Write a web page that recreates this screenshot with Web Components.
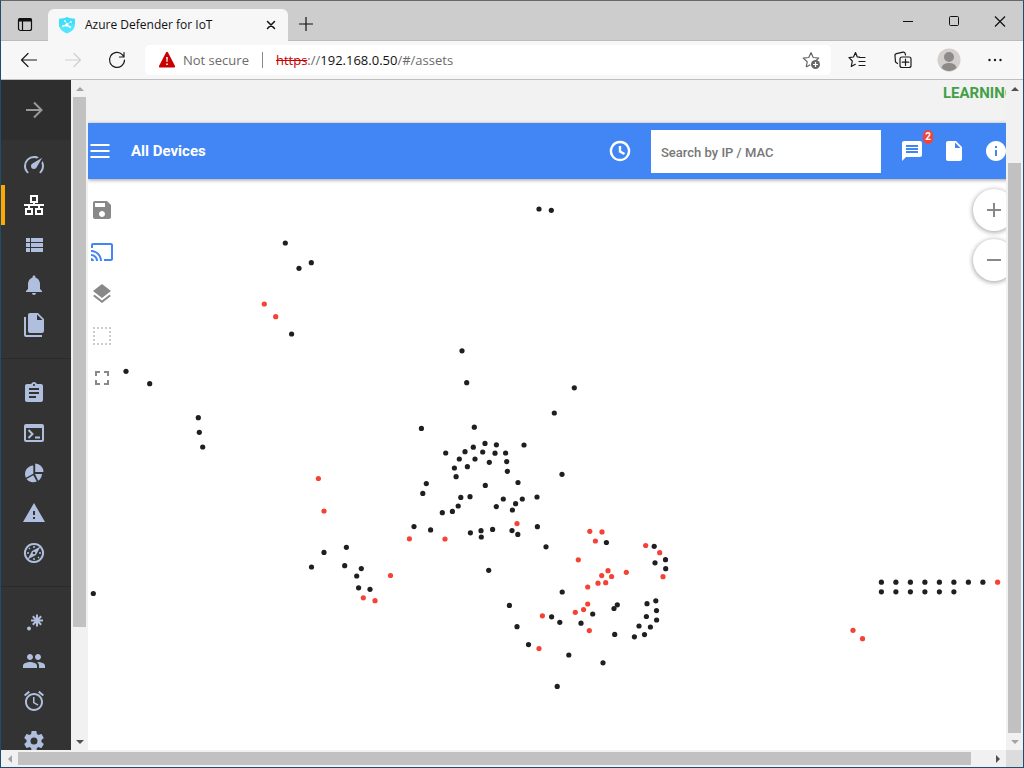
<!DOCTYPE html>
<html lang="en">
<head>
<meta charset="utf-8">
<title>Azure Defender for IoT</title>
<style>
  html, body { height: 100%; margin: 0; }
  body { font-family: Roboto, "Liberation Sans", sans-serif; overflow: hidden; }
</style>
</head>
<body>
<browser-window>
  <tab-strip slot="tabs">Azure Defender for IoT</tab-strip>
  <address-bar slot="toolbar"></address-bar>
  <side-nav slot="nav"></side-nav>
  <main-view slot="view"></main-view>
</browser-window>

<script>
const define = (name, html, setup) => {
  const template = document.createElement('template');
  template.innerHTML = html;
  customElements.define(name, class extends HTMLElement {
    constructor() {
      super();
      this.attachShadow({ mode: 'open' }).append(template.content.cloneNode(true));
    }
    connectedCallback() { if (setup) setup(this, this.shadowRoot); }
  });
};

const path = d => `<path fill="currentColor" d="${d}"/>`;
const line = (d, w = 1) => `<path fill="none" stroke="currentColor" stroke-width="${w}" stroke-linecap="round" stroke-linejoin="round" d="${d}"/>`;
const sharp = (d, w = 2) => `<path fill="none" stroke="currentColor" stroke-width="${w}" d="${d}"/>`;

const ICONS = {
  workspaces: `<rect x="5.5" y="6.5" width="13" height="12" rx="2" fill="none" stroke="currentColor" stroke-width="1.2"/><path d="M5 8a2 2 0 0 1 2-2h10a2 2 0 0 1 2 2v1.500H5z" fill="currentColor"/><path d="M9.500 9v9" stroke="currentColor" stroke-width="1.2"/>`,
  shield: `<path d="M12 4l2 1q3 1 6 .8v6.200q0 5-8 8.500q-8-3.500-8-8.500V5.800Q7 6 10 5z" fill="#50e6ff"/><path d="M12 4l2 1q3 1 6 .8v5L4 14V5.800Q7 6 10 5z" fill="#32d4f5" opacity=".5"/><g stroke="#fff" stroke-width=".6" fill="#fff"><path d="M8 13l4-2 3 3M12 11l-2-3M12 11l4-2"/><circle cx="8" cy="13" r=".8"/><circle cx="12" cy="11.500" r="1"/><circle cx="15" cy="14" r=".8"/><circle cx="10" cy="8" r=".6"/><circle cx="16" cy="9" r=".6"/></g>`,
  tabclose: line('M8.500 8.500l7 7M15.500 8.500l-7 7', 1.5),
  plus: sharp('M12 5v14M5 12h14', 1.2),
  minimize: sharp('M7 9.500h10', 1),
  maximize: `<rect x="7.500" y="4.500" width="9" height="9" rx="1" fill="none" stroke="currentColor"/>`,
  close: sharp('M7 4.500l10 10M17 4.500l-10 10', 1.2),
  back: line('M19.500 12H4.500M11 5.500L4.500 12l6.500 6.500', 1.2),
  forward: line('M4.500 12h15M13 5.500l6.500 6.500-6.500 6.500', 1.2),
  refresh: line('M19.500 12a7.500 7.500 0 1 1-2-5.200l1.500 2.200M19 4.500V9h-4.500', 1.2),
  danger: `<path d="M11 4.500q1-1.500 2 0l7 13.500q.5 1.500-1 1.500H5q-1.500 0-1-1.500z" fill="#c80000"/><path d="M11.200 9h1.600l-.3 5h-1zM11.200 15.500h1.600V17h-1.600z" fill="#fff"/>`,
  staradd: `<path d="M12 4.500l2.200 5 5.500.6-4 3.700M7.200 19l1-5.200-4-3.700 5.600-.6L12 4.500M7.200 19l4-2.300" fill="none" stroke="#666" stroke-width="1.200" stroke-linejoin="round"/><circle cx="16.500" cy="16.500" r="4.500" fill="#666"/><path d="M16.500 14v5M14 16.500h5" stroke="#fff" stroke-width="1.200"/>`,
  favorites: line('M14.500 9.200L12.300 9 10.500 4.500 8.500 9l-4.500.6 3.300 3.400-1 5.500 4-2.200M14.500 9.500h5.500M14 13.500h6M14 17.500h6', 1.2),
  collections: line('M6.500 15.500l-2-1.500L4 8a2 2 0 0 1 1.500-2.300l6.500-1.500a2 2 0 0 1 2.200 1.500l.3 1.300M11 9h7a2 2 0 0 1 2 2v6.500a2 2 0 0 1-2 2h-7a2 2 0 0 1-2-2V11a2 2 0 0 1 2-2zM14.500 11v6.500M11.200 14.200h6.600', 1.2),
  dots: `<g fill="currentColor"><circle cx="6.500" cy="12" r="1.200"/><circle cx="12" cy="12" r="1.200"/><circle cx="17.500" cy="12" r="1.200"/></g>`,
  avatar: `<circle cx="12" cy="12" r="11.500" fill="#d2cfcc"/><circle cx="12" cy="9" r="5" fill="#8e8a87"/><path d="M4.500 20q1-5 7.500-5t7.500 5q-3.500 3.200-7.500 3.200T4.500 20z" fill="#8e8a87"/>`,
  arrow: sharp('M4 12h15M12 4.500l7.500 7.500-7.500 7.500', 2),
  gauge: path('M12,16A3,3 0 0,1 9,13C9,11.88 9.61,10.9 10.5,10.39L20.21,4.77L14.68,14.35C14.18,15.33 13.17,16 12,16M12,3C13.81,3 15.5,3.5 16.97,4.32L14.87,5.53C14,5.19 13,5 12,5A8,8 0 0,0 4,13C4,15.21 4.89,17.21 6.34,18.65C6.74,19.04 6.74,19.67 6.35,20.06C5.96,20.45 5.32,20.45 4.93,20.07C3.12,18.26 2,15.76 2,13A10,10 0 0,1 12,3M22,13C22,15.76 20.88,18.26 19.07,20.07C18.68,20.45 18.05,20.45 17.66,20.06C17.27,19.67 17.27,19.04 17.66,18.65C19.11,17.2 20,15.21 20,13C20,12 19.81,11 19.46,10.1L20.67,8C21.5,9.5 22,11.18 22,13Z'),
  network: sharp('M9 3h6v6H9zM12 9v3M2 12h20M7 12v3M17 12v3M4 16h6v5H4zM14 16h6v5h-6z', 2),
  list: path('M4 14h4v-4H4v4zm0 5h4v-4H4v4zM4 9h4V5H4v4zm5 5h12v-4H9v4zm0 5h12v-4H9v4zM9 5v4h12V5H9z'),
  bell: path('M12 22c1.100 0 2-.9 2-2h-4c0 1.100.89 2 2 2zm6-6v-5c0-3.070-1.640-5.640-4.500-6.320V4c0-.83-.67-1.500-1.500-1.500s-1.500.67-1.500 1.500v.68C7.630 5.360 6 7.920 6 11v5l-2 2v1h16v-1l-2-2z'),
  files: path('M15,7H20.5L15,1.5V7M8,0H16L22,6V18A2,2 0 0,1 20,20H8C6.89,20 6,19.1 6,18V2A2,2 0 0,1 8,0M4,4V22H20V24H4A2,2 0 0,1 2,22V4H4Z'),
  clipboard: path('M19 3h-4.180C14.400 1.840 13.300 1 12 1c-1.300 0-2.400.84-2.820 2H5c-1.100 0-2 .9-2 2v14c0 1.100.9 2 2 2h14c1.100 0 2-.9 2-2V5c0-1.100-.9-2-2-2zm-7 0c.55 0 1 .45 1 1s-.45 1-1 1-1-.45-1-1 .45-1 1-1zm2 14H7v-2h7v2zm3-4H7v-2h10v2zm0-4H7V7h10v2z'),
  console: `<path fill="currentColor" fill-rule="evenodd" d="M4 3h16a2 2 0 0 1 2 2v14a2 2 0 0 1-2 2H4a2 2 0 0 1-2-2V5a2 2 0 0 1 2-2zM4 7v12h16V7z"/>` + sharp('M6.500 9l4 4-4 4M13 16.500h5', 2),
  pie: path('M13.200 2.500A8.500 8.500 0 0 1 21.500 11h-8.300zM11.300 4.500v8.300l-7.400 4A8.500 8.500 0 0 1 11.300 4.500zM4.500 18l6.800-3.800 3.500 6.300A8.500 8.500 0 0 1 4.500 18zM13 13h7a8.500 8.500 0 0 1-3.800 6.700z'),
  warning: path('M1 21h22L12 2 1 21zm12-3h-2v-2h2v2zm0-4h-2v-4h2v4z'),
  compass: sharp('M12 3a9 9 0 1 1-.01 0z', 2) + path('M18.500 5.500l-4.500 8.500-8.500 4.500 4.500-8.500z') + `<circle cx="12" cy="12" r="1.300" fill="#333"/>` + sharp('M12 5v2M12 17v2M5 12h2M17 12h2M7 7l1 1M16 16l1 1', 1.5),
  spark: sharp('M15 5.500v12M9 11.500h12M10.800 7.300l8.400 8.400M19.200 7.300l-8.400 8.400', 2) + `<circle cx="7" cy="19.500" r="2" fill="currentColor"/>`,
  people: path('M16 11c1.660 0 2.990-1.340 2.990-3S17.660 5 16 5c-1.660 0-3 1.340-3 3s1.340 3 3 3zm-8 0c1.660 0 2.990-1.340 2.990-3S9.660 5 8 5C6.340 5 5 6.340 5 8s1.340 3 3 3zm0 2c-2.330 0-7 1.170-7 3.500V19h14v-2.500c0-2.330-4.670-3.500-7-3.500zm8 0c-.29 0-.62.02-.97.05 1.160.84 1.970 1.970 1.970 3.450V19h6v-2.500c0-2.330-4.670-3.500-7-3.500z'),
  alarm: path('M22 5.720l-4.600-3.860-1.290 1.530 4.600 3.860L22 5.720zM7.880 3.390L6.600 1.860 2 5.710l1.290 1.530 4.590-3.850zM12.500 8H11v6l4.750 2.850.75-1.230-4-2.370V8zM12 4c-4.970 0-9 4.030-9 9s4.020 9 9 9c4.970 0 9-4.030 9-9s-4.030-9-9-9zm0 16c-3.870 0-7-3.130-7-7s3.130-7 7-7 7 3.130 7 7-3.130 7-7 7z'),
  gear: path('M12,15.5A3.5,3.5 0 0,1 8.5,12A3.5,3.5 0 0,1 12,8.5A3.5,3.5 0 0,1 15.5,12A3.5,3.5 0 0,1 12,15.5M19.43,12.97C19.47,12.65 19.5,12.33 19.5,12C19.5,11.67 19.47,11.34 19.43,11L21.54,9.37C21.73,9.22 21.78,8.95 21.66,8.73L19.66,5.27C19.54,5.05 19.27,4.96 19.05,5.05L16.56,6.05C16.04,5.66 15.5,5.32 14.87,5.07L14.5,2.42C14.46,2.18 14.25,2 14,2H10C9.75,2 9.54,2.18 9.5,2.42L9.13,5.07C8.5,5.32 7.96,5.66 7.44,6.05L4.95,5.05C4.73,4.96 4.46,5.05 4.34,5.27L2.34,8.73C2.21,8.95 2.27,9.22 2.46,9.37L4.57,11C4.53,11.34 4.5,11.67 4.5,12C4.5,12.33 4.53,12.65 4.57,12.97L2.46,14.63C2.27,14.78 2.21,15.05 2.34,15.27L4.34,18.73C4.46,18.95 4.73,19.03 4.95,18.95L7.44,17.94C7.96,18.34 8.5,18.68 9.13,18.93L9.5,21.58C9.54,21.82 9.75,22 10,22H14C14.25,22 14.46,21.82 14.5,21.58L14.87,18.93C15.5,18.67 16.04,18.34 16.56,17.94L19.05,18.95C19.27,19.03 19.54,18.95 19.66,18.73L21.66,15.27C21.78,15.05 21.73,14.78 21.54,14.63L19.43,12.97Z'),
  menu: sharp('M2.500 6h19M2.500 12h19M2.500 18h19', 2),
  clock: sharp('M12 3a9 9 0 1 1-.01 0zM12 7v5.500l4.500 2.500', 2.4),
  message: path('M20 2H4c-1.100 0-2 .9-2 2v18l4-4h14c1.100 0 2-.9 2-2V4c0-1.100-.9-2-2-2zm-2 12H6v-2h12v2zm0-3H6V9h12v2zm0-3H6V6h12v2z'),
  file: path('M6 2c-1.100 0-2 .9-2 2v16c0 1.100.9 2 2 2h12c1.100 0 2-.9 2-2V8l-6-6H6zm7 7V3.500L18.500 9H13z'),
  info: path('M12 2C6.480 2 2 6.480 2 12s4.480 10 10 10 10-4.480 10-10S17.520 2 12 2zm1 15h-2v-6h2v6zm0-8h-2V7h2v2z'),
  save: path('M17 3H5c-1.110 0-2 .9-2 2v14c0 1.100.89 2 2 2h14c1.100 0 2-.9 2-2V7l-4-4zm-5 16c-1.660 0-3-1.340-3-3s1.340-3 3-3 3 1.340 3 3-1.340 3-3 3zm3-10H5V5h10v4z'),
  cast: path('M21 3H3c-1.100 0-2 .9-2 2v3h2V5h18v14h-7v2h7c1.100 0 2-.9 2-2V5c0-1.100-.9-2-2-2zM1 18v3h3c0-1.660-1.340-3-3-3zm0-4v2c2.760 0 5 2.240 5 5h2c0-3.870-3.130-7-7-7zm0-4v2c4.970 0 9 4.030 9 9h2c0-6.080-4.930-11-11-11z'),
  layers: path('M11.990 18.540l-7.370-5.730L3 14.070l9 7 9-7-1.630-1.270-7.380 5.740zM12 16l7.360-5.730L21 9l-9-7-9 7 1.630 1.270L12 16z'),
  select: `<path fill="none" stroke="currentColor" stroke-width="2" stroke-dasharray="2 2" d="M3 4h18M3 20h18M4 7v12M20 7v12"/>`,
  fullscreen: path('M7 14H5v5h5v-2H7v-3zm-2-4h2V7h3V5H5v5zm12 7h-3v2h5v-5h-2v3zM14 5v2h3v3h2V5h-5z'),
  zoomin: sharp('M12 5v14M5 12h14', 2),
  zoomout: sharp('M5 12h14', 2)
};

define('ui-icon', `
  <style>
    :host { display: inline-flex; flex: none; width: 24px; height: 24px; }
    svg { display: block; width: 100%; height: 100%; }
  </style>
  <svg viewBox="0 0 24 24" aria-hidden="true"></svg>`,
  (host, root) => { root.querySelector('svg').innerHTML = ICONS[host.getAttribute('name')] || ''; });

/* Scroll bar: lead, thumb and rest are shares of the track between the arrows. */
define('scroll-track', `
  <style>
    :host { display: flex; flex-direction: column; flex: none; width: 17px; background: #f1f1f1; }
    i { flex: none; width: 17px; height: 17px; display: grid; place-items: center; }
    i::before { content: ""; border: 4px solid transparent; border-top-width: 0; border-bottom-color: #505050; }
    i.end::before { transform: rotate(180deg); }
    :host([edge="start"]) i.start::before, :host([edge="end"]) i.end::before { border-bottom-color: #a3a3a3; }
    .track { flex: 1; display: flex; flex-direction: column; align-items: center; }
    .lead { flex: var(--lead, 0) 0 0px; }
    .thumb { flex: var(--thumb) 0 0px; width: 13px; background: #c1c1c1; }
    .rest { flex: var(--rest, 0) 0 0px; }
    :host([horizontal]) { flex-direction: row; width: auto; height: 17px; }
    :host([horizontal]) .track { flex-direction: row; }
    :host([horizontal]) .thumb { width: auto; height: 13px; }
    :host([horizontal]) i.start::before { transform: rotate(-90deg); }
    :host([horizontal]) i.end::before { transform: rotate(90deg); }
  </style>
  <i class="start"></i>
  <div class="track"><div class="lead"></div><div class="thumb"></div><div class="rest"></div></div>
  <i class="end"></i>`);

define('browser-window', `
  <style>
    :host { display: flex; flex-direction: column; box-sizing: border-box; height: 100vh; border: 1px solid #1b4f6c; border-top-color: #686868; background: #fff; }
    .body { flex: 1; min-height: 0; display: flex; }
    slot[name="view"] { display: block; flex: 1; min-width: 0; overflow: hidden; }
    .foot { display: flex; background: #dcdcdc; }
    .foot scroll-track { flex: 1; }
    .corner { width: 17px; }
    .inner { --thumb: 530; --rest: 106; }
    .outer { --lead: 66; --thumb: 570; }
    .wide { --thumb: 953; --rest: 18; }
  </style>
  <slot name="tabs"></slot>
  <slot name="toolbar"></slot>
  <div class="body">
    <slot name="nav"></slot>
    <scroll-track class="inner" edge="start"></scroll-track>
    <slot name="view"></slot>
    <scroll-track class="outer" edge="end"></scroll-track>
  </div>
  <div class="foot"><scroll-track class="wide" horizontal edge="start"></scroll-track><div class="corner"></div></div>`);

define('tab-strip', `
  <style>
    :host { display: flex; align-items: flex-start; height: 39px; border-bottom: 1px solid #bcbcbc; background: #cdcdcd; color: #111; font: 12px/16px "Open Sans", sans-serif; }
    button { border: 0; margin: 0; padding: 0; background: none; color: inherit; display: grid; place-items: center; }
    .work { width: 47px; height: 46px; }
    .tab { box-sizing: border-box; width: 240px; height: 32px; margin-top: 8px; padding: 0 5px 0 7px; display: flex; align-items: center; background: #f7f7f7; border-radius: 6px 6px 0 0; }
    .tab span { flex: 1; padding-left: 6px; white-space: nowrap; }
    .add { width: 36px; height: 46px; }
    .controls { display: flex; margin-left: auto; }
    .controls button { width: 46px; height: 46px; }
  </style>
  <button class="work" aria-label="Tab actions"><ui-icon name="workspaces"></ui-icon></button>
  <div class="tab"><ui-icon name="shield"></ui-icon><span><slot></slot></span><button aria-label="Close tab"><ui-icon name="tabclose"></ui-icon></button></div>
  <button class="add" aria-label="New tab"><ui-icon name="plus"></ui-icon></button>
  <div class="controls">
    <button aria-label="Minimize"><ui-icon name="minimize"></ui-icon></button>
    <button aria-label="Maximize"><ui-icon name="maximize"></ui-icon></button>
    <button aria-label="Close"><ui-icon name="close"></ui-icon></button>
  </div>`);

define('address-bar', `
  <style>
    :host { display: flex; align-items: center; height: 38px; padding: 0 5px 0 6px; background: #f7f7f7; border-bottom: 1px solid #bfbfbf; color: #1b1b1b; font: 13px/20px "Open Sans", sans-serif; }
    button { flex: none; border: 0; margin: 0; padding: 0; width: 46px; height: 30px; background: none; color: inherit; display: grid; place-items: center; }
    .nav { width: 44px; }
    .off { color: #cfcfcf; }
    .field { flex: 1; min-width: 0; display: flex; align-items: center; height: 30px; margin: 0 3px 0 6px; padding-left: 10px; background: #fff; border-radius: 5px; white-space: nowrap; }
    .state { padding: 0 13px 0 4px; color: #6b6b6b; }
    .url { padding-left: 13px; color: #6b6b6b; }
    .rule { width: 1px; height: 16px; background: #8a8a8a; }
    s { color: #c80000; }
    b { font-weight: 400; color: #111; }
    .field button { margin-left: auto; width: 40px; }
  </style>
  <button class="nav" aria-label="Back"><ui-icon name="back"></ui-icon></button>
  <button class="nav off" aria-label="Forward"><ui-icon name="forward"></ui-icon></button>
  <button class="nav" aria-label="Refresh"><ui-icon name="refresh"></ui-icon></button>
  <div class="field">
    <ui-icon name="danger"></ui-icon><span class="state">Not secure</span><span class="rule"></span>
    <span class="url" role="textbox" aria-label="Address"><s>https</s>://<b>192.168.0.50</b>/#/assets</span>
    <button aria-label="Add to favorites"><ui-icon name="staradd"></ui-icon></button>
  </div>
  <button aria-label="Favorites"><ui-icon name="favorites"></ui-icon></button>
  <button aria-label="Collections"><ui-icon name="collections"></ui-icon></button>
  <button aria-label="Profile"><ui-icon name="avatar"></ui-icon></button>
  <button aria-label="Settings and more"><ui-icon name="dots"></ui-icon></button>`);

define('nav-item', `
  <style>
    :host { display: block; height: 40px; color: #b0bfdd; }
    a { display: grid; place-items: center; height: 100%; box-sizing: border-box; border-left: 4px solid transparent; padding-right: 8px; color: inherit; }
    :host([current]) { color: #fff; }
    :host([current]) a { border-left-color: #ffa800; }
  </style>
  <a href="#"><ui-icon></ui-icon></a>`,
  (host, root) => {
    root.querySelector('ui-icon').setAttribute('name', host.getAttribute('icon'));
    root.querySelector('a').setAttribute('aria-label', host.getAttribute('label'));
    root.querySelector('ui-icon').connectedCallback();
  });

define('side-nav', `
  <style>
    :host { display: block; flex: none; width: 70px; background: #333; overflow: hidden; }
    button { display: grid; place-items: center; width: 100%; height: 60px; border: 0; padding: 0 4px 0 0; background: #2e2e2e; color: #999; }
    nav { padding: 14px 0 13px; border-bottom: 1px solid #2a2a2a; }
    nav:first-of-type { padding-top: 5px; }
  </style>
  <button aria-label="Expand menu"><ui-icon name="arrow"></ui-icon></button>
  <nav>
    <nav-item icon="gauge" label="Dashboard"></nav-item>
    <nav-item icon="network" label="Assets map" current></nav-item>
    <nav-item icon="list" label="Inventory"></nav-item>
    <nav-item icon="bell" label="Alerts"></nav-item>
    <nav-item icon="files" label="Reports"></nav-item>
  </nav>
  <nav>
    <nav-item icon="clipboard" label="Event timeline"></nav-item>
    <nav-item icon="console" label="Data mining"></nav-item>
    <nav-item icon="pie" label="Statistics"></nav-item>
    <nav-item icon="warning" label="Risk"></nav-item>
    <nav-item icon="compass" label="Attack vectors"></nav-item>
  </nav>
  <nav>
    <nav-item icon="spark" label="Custom alerts"></nav-item>
    <nav-item icon="people" label="Users"></nav-item>
    <nav-item icon="alarm" label="Schedule"></nav-item>
    <nav-item icon="gear" label="System settings"></nav-item>
  </nav>`);

define('device-bar', `
  <style>
    :host { display: flex; align-items: center; height: 56px; padding-right: 1px; background: #4286f5; color: #fff; box-shadow: 0 1px 4px rgba(0,0,0,.4); position: relative; }
    button { flex: none; position: relative; border: 0; padding: 0; width: 42px; height: 42px; background: none; color: inherit; display: grid; place-items: center; }
    .menu { width: 24px; }
    h1 { margin: 0 auto 0 19px; font-size: 15px; line-height: 20px; font-weight: 700; }
    input { box-sizing: border-box; width: 230px; height: 43px; margin: 1px 10px 0; padding: 2px 10px 0; border: 0; border-radius: 0; background: #fff; color: #444; font: 500 13px/16px Roboto, sans-serif; }
    input::placeholder { color: #777; opacity: 1; }
    .badge { position: absolute; top: 0; right: 0; width: 10px; height: 14px; border-radius: 5px; background: #f44336; font: 700 10px/14px Roboto, sans-serif; text-align: center; }
  </style>
  <button class="menu" aria-label="Menu"><ui-icon name="menu"></ui-icon></button>
  <h1>All Devices</h1>
  <button aria-label="History"><ui-icon name="clock"></ui-icon></button>
  <input type="search" placeholder="Search by IP / MAC" aria-label="Search by IP / MAC">
  <button aria-label="Messages"><ui-icon name="message"></ui-icon><span class="badge">2</span></button>
  <button aria-label="Report"><ui-icon name="file"></ui-icon></button>
  <button aria-label="Information"><ui-icon name="info"></ui-icon></button>`);

/* Device positions in window coordinates, as x,y pairs. */
const DEVICES = `539,209 551.3,210.3 285.3,243 311.3,262.7 299,268.3 291.6,334 126,371.3 149.7,383.7 198.3,417.7 199.3,432.3 202.7,447 93.3,593.5
462,350.8 466.7,382.7 574.3,387.8 554.3,413 421.4,428.4 474.3,427.2 485,443.4 496.4,444.8 524,445 473.3,447.2 465,451.7 482.7,452 445.7,453 495,453.2 505.6,453
459.3,459 475,459 489.3,462.3 506.7,461.6 454.4,468 467.4,466.7 507.4,471.3 456.1,476.7 562,474.3 426.3,483.6 518,482.5 422.8,493.4 485.3,485.4 460.8,497.4 470,496.7
503.3,499 522.3,499 537,497 458.2,506 515.6,503.7 496.3,506.6 512.4,510 442.3,512.7 452.4,511.4 414,526.6 430.6,529.9 470.4,532.8 481,530.7 481.3,537 492.6,529.4
512,530.6 517.8,534.4 537.4,526.7 546,546.8 606.4,542.5 654.2,546.3 665.5,559.7 655,562.8 665.7,568.7 562.2,592 488.7,570.3 509.4,605.4 592.7,614 617.3,604.8 614,608.5
647,603.7 655.8,600.8 656.5,610.6 646.4,616.5 656.6,620 639,626 650.4,627 634.4,636.8 644.5,634.6 614.7,634.4 581,623.2 551.6,616.8 559.8,622.3 517,626.7 528.5,644.6
568.8,655 603,662.8 557.2,686.4 346.4,547.3 324,552.4 311.5,567 344.7,565.7 361.3,568.6 356.7,576 358.6,587.8 370,589.3
881.4,582.2 895.9,582.2 910.4,582.2 924.9,582.2 939.4,582.2 953.9,582.2 968.4,582.2 982.9,582.2 881.4,591.8 895.9,591.8 910.4,591.8 924.9,591.8 939.4,591.8 953.9,591.8`;
const ALERTED = `264.3,304 275.7,316.7 318.4,478.5 324,511 363.3,597.8 375,600.7 390.5,575.5 409.4,538.8 445,539 517,523.6 589.8,531.3 602,531.9 595.4,541 578.3,559.8
645.7,545.5 659.7,552.7 663,576.7 608,570.7 626.3,572.3 601.7,575.6 611.6,576.5 598,583.2 605.7,582.7 587.7,587 587.7,604 583.6,609.6 575.3,612.3 589.3,630.6
542.4,615.8 539,648.6 997.6,582.2 853,630.3 862.5,638.7`;

define('device-map', `
  <style>
    :host { display: block; flex: 1; min-height: 0; position: relative; background: #fff; overflow: hidden; }
    svg { display: block; width: 100%; height: 100%; }
    .ok { fill: #1f1f1f; }
    .alert { fill: #f44336; }
    button { border: 0; padding: 0; background: none; color: #888; display: grid; place-items: center; }
    .tools, .zoom { position: absolute; top: 10px; display: grid; }
    .tools { left: 2px; }
    .tools button { width: 24px; height: 42px; }
    .tools .on { color: #4286f5; }
    .tools .dim { color: #ccc; }
    .zoom { right: 3px; gap: 8px; }
    .zoom button { width: 42px; height: 42px; border-radius: 50%; background: #fff; box-shadow: 0 1px 4px 1px rgba(0,0,0,.3); }
  </style>
  <svg role="img" aria-label="Network map of devices"><g transform="translate(-88 -179)"><g class="ok"></g><g class="alert"></g></g></svg>
  <div class="tools">
    <button aria-label="Save layout"><ui-icon name="save"></ui-icon></button>
    <button class="on" aria-label="Broadcast filter"><ui-icon name="cast"></ui-icon></button>
    <button aria-label="Layers"><ui-icon name="layers"></ui-icon></button>
    <button class="dim" aria-label="Select area"><ui-icon name="select"></ui-icon></button>
    <button aria-label="Fit to screen"><ui-icon name="fullscreen"></ui-icon></button>
  </div>
  <div class="zoom">
    <button aria-label="Zoom in"><ui-icon name="zoomin"></ui-icon></button>
    <button aria-label="Zoom out"><ui-icon name="zoomout"></ui-icon></button>
  </div>`,
  (host, root) => {
    const plot = (cls, list) => {
      root.querySelector(cls).innerHTML = list.split(/\s+/).map(p => {
        const [x, y] = p.split(',');
        return `<circle cx="${x}" cy="${y}" r="2.6"/>`;
      }).join('');
    };
    plot('.ok', DEVICES);
    plot('.alert', ALERTED);
  });

define('main-view', `
  <style>
    :host { display: flex; flex-direction: column; width: calc(100% + 12px); height: 100%; }
    header { height: 43px; box-sizing: border-box; padding: 3px 3px 0; background: #f2f2f2; color: #43a047; font-size: 15px; line-height: 20px; font-weight: 700; text-align: right; }
    device-bar { z-index: 1; }
  </style>
  <header>LEARNING</header>
  <device-bar></device-bar>
  <device-map></device-map>`);
</script>
</body>
</html>
